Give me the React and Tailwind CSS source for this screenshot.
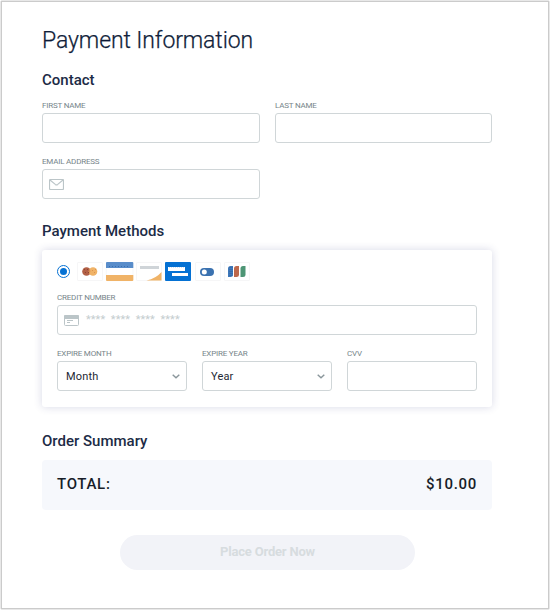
const inputBox = "flex h-[30px] w-full items-center rounded-[3px] border border-[#d0d6d8] bg-white";

function Label({ children, className = "" }) {
  return (
    <div className={`h-[16px] whitespace-nowrap pt-px text-[8px] leading-[16px] tracking-[-0.2px] text-[#77858a] ${className}`}>
      {children}
    </div>
  );
}

function Heading({ children, className = "" }) {
  return (
    <h2 className={`h-5 whitespace-nowrap text-[15px] leading-5 font-medium text-[#1c2b46] ${className}`}>
      {children}
    </h2>
  );
}

function Chevron() {
  return (
    <svg className="mt-px h-[5px] w-[8px]" viewBox="0 0 8 5" fill="none" stroke="#8a969b" strokeWidth="1.4">
      <path d="M0.7 0.7 L4 3.8 L7.3 0.7" />
    </svg>
  );
}

function Select({ label, value }) {
  return (
    <div className="w-[130px]">
      <Label>{label}</Label>
      <div className={`${inputBox} justify-between pr-[6px] pl-[8px]`}>
        <span className="pt-[2px] text-[11px] tracking-[0.15px] text-[#1d2733]">{value}</span>
        <Chevron />
      </div>
    </div>
  );
}

function CardLogos() {
  const frame = { fill: "#fff", stroke: "#f6f6f7", strokeWidth: 1 };
  return (
    <svg className="ml-[6px] h-[20px] w-[175px]" viewBox="0 0 175 20">
      <rect x="0.5" y="0.5" width="25" height="18" rx="0.5" {...frame} />
      <circle cx="9.5" cy="9.5" r="4.3" fill="#b15f45" />
      <circle cx="16" cy="9.5" r="4.3" fill="#f0b367" />
      <path d="M12.7 6.8 Q14 9.5 12.7 12.2 Q11.5 9.5 12.7 6.8Z" fill="#cf7f4a" />
      <g fill="#8d4433">
        <rect x="7" y="7" width="1" height="1" />
        <rect x="10" y="7" width="1" height="1" />
        <rect x="8" y="10" width="1" height="1" />
        <rect x="11" y="10" width="1" height="1" />
      </g>
      <g fill="#dc9350">
        <rect x="15" y="8" width="1" height="1" />
        <rect x="17" y="10" width="1" height="1" />
        <rect x="18" y="7" width="1" height="1" />
      </g>
      <rect x="29.3" y="0.3" width="26.7" height="18.4" rx="0.8" fill="#fff" stroke="#eef1f6" strokeWidth="0.6" />
      <path d="M29 6V1Q29 0 30 0H55.3Q56.3 0 56.3 1V6Z" fill="#598dca" />
      <path d="M32 4.5H53" stroke="#3a6fb0" strokeWidth="1" strokeDasharray="1 2" />
      <path d="M29 13H56.3V18Q56.3 19 55.3 19H30Q29 19 29 18Z" fill="#f0b367" />
      <rect x="59.5" y="0.5" width="25" height="18" rx="0.5" {...frame} />
      <rect x="63" y="4" width="19" height="3" fill="#cfd4d8" />
      <path d="M69.5 18.5Q79 16.5 84.5 10V18.5Z" fill="#f0b367" />
      <rect x="88" y="0" width="26" height="19" rx="1" fill="#0571d3" />
      <rect x="91" y="5" width="17" height="4" fill="#fff" />
      <path d="M92 5.5H107" stroke="#cfe3f7" strokeWidth="1" strokeDasharray="1 1" />
      <rect x="95" y="11" width="16" height="3" fill="#fff" />
      <rect x="118.5" y="0.5" width="25" height="18" rx="0.5" {...frame} />
      <rect x="123" y="6" width="14" height="8" rx="4" fill="#3b72b0" />
      <circle cx="127.3" cy="10" r="2.5" fill="#fff" />
      <rect x="147.5" y="0.5" width="25" height="18" rx="0.5" {...frame} />
      <path d="M151 15V6.500Q151 4 153.500 4H156V13Q156 15 153.500 15Z" fill="#3e78ba" />
      <path d="M153 5V14M155 5V14" stroke="#2d5d99" strokeWidth="0.8" strokeDasharray="1 1" />
      <path d="M157 15V6.500Q157 4 159.500 4H162V13Q162 15 159.500 15Z" fill="#bd684c" />
      <path d="M163.500 15V6.500Q163.500 4 166 4H168.500V13Q168.500 15 166 15Z" fill="#4d9575" />
    </svg>
  );
}

export default function App() {
  return (
    <div className="h-[611px] w-[551px] bg-white font-['Roboto','Liberation_Sans',sans-serif]">
      <div className="h-[610px] w-[550px] rounded-[2px] border border-[#e8e8e8]">
        <main className="h-[608px] w-[548px] border border-[#cbcbcb] bg-white px-[40px] pt-[23px]">
          <h1 className="h-8 text-[23px] leading-8 font-light tracking-[-0.1px] whitespace-nowrap text-[#0c1a36] [-webkit-text-stroke:0.25px_#1c2b46]">
            Payment Information
          </h1>

          <Heading className="mt-[13px]">Contact</Heading>
          <div className="mt-[7px] grid grid-cols-[218px_217px] gap-[15px]">
            <div>
              <Label>FIRST NAME</Label>
              <div className={inputBox} />
            </div>
            <div>
              <Label>LAST NAME</Label>
              <div className={inputBox} />
            </div>
          </div>
          <div className="mt-[10px] w-[218px]">
            <Label>EMAIL ADDRESS</Label>
            <div className={`${inputBox} pl-[6px]`}>
              <svg className="mt-px h-[11px] w-[15px]" viewBox="0 0 15 11" fill="none" stroke="#bbc5c8" strokeWidth="1.2">
                <rect x="0.5" y="0.5" width="14" height="10" rx="1" />
                <path d="M1 1L6.3 5.4Q7.5 6.3 8.7 5.4L14 1" />
              </svg>
            </div>
          </div>

          <Heading className="mt-[22px]">Payment Methods</Heading>
          <section className="mt-[9px] h-[157px] w-[450px] rounded-[3px] bg-white px-[15px] pt-[12px] shadow-[0_0_8px_rgba(40,50,120,0.19)]">
            <div className="flex h-[20px] items-start">
              <div className="mt-[3px] flex size-[13px] items-center justify-center rounded-full border border-[#0571d3]">
                <div className="size-[7px] rounded-full bg-[#0571d3]" />
              </div>
              <div className="w-px" />
              <CardLogos />
            </div>
            <Label className="mt-[7px]">CREDIT NUMBER</Label>
            <div className={`${inputBox} gap-[7px] pl-[6px]`}>
              <svg className="h-[11px] w-[15px]" viewBox="0 0 15 11" fill="none">
                <rect x="0.5" y="0.5" width="14" height="10" rx="1" stroke="#bbc5c8" />
                <path d="M0 1Q0 0 1 0H14Q15 0 15 1V4H0Z" fill="#bbc5c8" />
                <path d="M3 5.5H9M3 7.5H6" stroke="#bbc5c8" />
              </svg>
              <span className="text-[11px] tracking-[0.07px] whitespace-pre text-[#c5cdcf]">
                {"****  ****  ****  ****"}
              </span>
            </div>
            <div className="mt-[10px] flex gap-[15px]">
              <Select label="EXPIRE MONTH" value="Month" />
              <Select label="EXPIRE YEAR" value="Year" />
              <div className="w-[130px]">
                <Label>CVV</Label>
                <div className={inputBox} />
              </div>
            </div>
          </section>

          <Heading className="mt-[24px]">Order Summary</Heading>
          <div className="mt-[9px] flex h-[50px] w-[450px] items-center justify-between rounded-[4px] bg-[#f6f8fc] px-[15px] pb-[2px] text-[15px] font-medium text-[#171d28]">
            <span className="tracking-[0.7px]">TOTAL:</span>
            <span className="tracking-[0.7px]">$10.00</span>
          </div>
          <button
            disabled
            className="mt-[25px] ml-[78px] flex h-[35px] w-[295px] items-center justify-center rounded-full bg-[#f2f3f8] pb-[2px] text-[13px] font-bold tracking-[-0.2px] text-[#d7dcdf]"
          >
            Place Order Now
          </button>
        </main>
      </div>
    </div>
  );
}
